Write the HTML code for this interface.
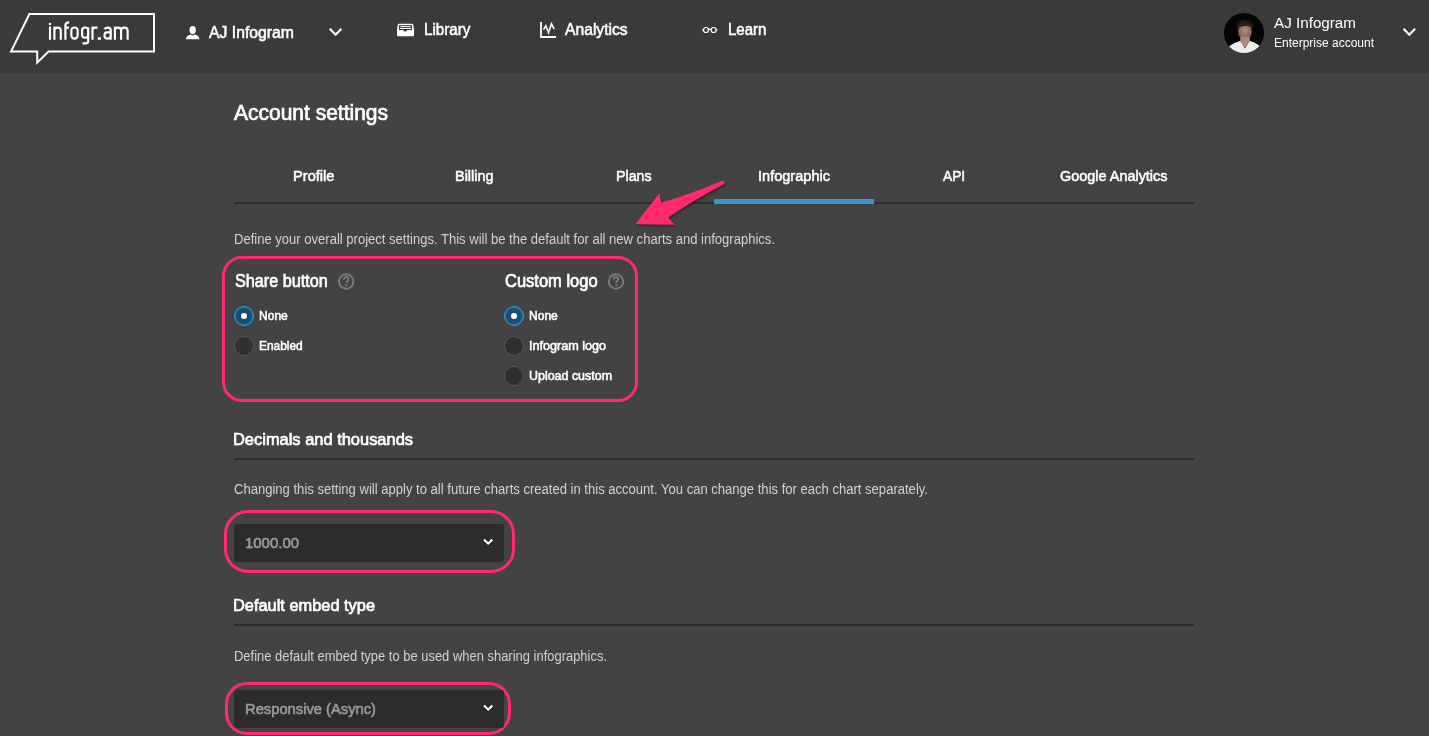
<!DOCTYPE html>
<html><head><meta charset="utf-8">
<style>
html,body{margin:0;padding:0;}
body{width:1429px;height:736px;overflow:hidden;background:#434343;position:relative;font-family:"Liberation Sans",sans-serif;}
.hdr{position:absolute;left:0;top:0;width:1429px;height:73px;background:#3a3a3a;}
.t{position:absolute;line-height:0;white-space:nowrap;}
.t span{display:inline-block;transform-origin:0 0;}
.abs{position:absolute;}
.line{position:absolute;left:234px;width:960px;height:2px;background:#2c2c2c;}
.pinkbox{position:absolute;border:3px solid #ff2a6d;box-sizing:border-box;}
.sel{position:absolute;left:234px;width:270px;height:38px;background:#2c2c2c;border-radius:3px;}
.radio{position:absolute;width:20px;height:20px;box-sizing:border-box;border-radius:50%;background:#2f2f2f;border:1px solid #565656;}
.radio.on{background:#194e74;border:1px solid #3a98d2;box-shadow:inset 0 0 0 1px rgba(58,152,210,0.45);}
.radio.on::after{content:"";position:absolute;left:50%;top:50%;width:6.6px;height:6.6px;margin:-3.3px 0 0 -3.3px;border-radius:50%;background:#fff;}
</style></head><body>
<div class="hdr"></div>
<svg class="abs" style="left:0;top:0" width="1429" height="736" viewBox="0 0 1429 736">
  <defs>
    <clipPath id="av"><circle cx="1244" cy="33" r="20"/></clipPath>
    <filter id="sh" x="-20%" y="-20%" width="140%" height="140%"><feDropShadow dx="1" dy="1.5" stdDeviation="1.2" flood-color="#000" flood-opacity="0.45"/></filter>
    <radialGradient id="face" cx="0.5" cy="0.45" r="0.6"><stop offset="0" stop-color="#b28a7c"/><stop offset="1" stop-color="#7a5a4e"/></radialGradient>
  </defs>
  <!-- logo bubble -->
  <path d="M11,51.6 L29.4,14 H154 V51.6 H48.5 L37.2,62.6 V51.6 Z" fill="none" stroke="#fff" stroke-width="2" stroke-linejoin="miter"/>
  <g fill="none" stroke="#fff" stroke-width="2.15" stroke-linejoin="round">
    <path d="M50,26.4 V39.8"/>
    <path d="M54.4,39.8 V26.4 M54.4,30.5 C54.4,28.3 55.8,27.55 57.6,27.55 C59.6,27.55 60.8,28.5 60.8,30.8 V39.8"/>
    <path d="M65.4,39.8 V25.5 C65.4,23 66.5,22.3 69.2,22.3 M65.4,27.6 H69"/>
    <rect x="71.35" y="27.45" width="6.3" height="11.2" rx="3.1"/>
    <rect x="82.05" y="27.45" width="6.1" height="10.3" rx="3"/>
    <path d="M88.15,27.5 V41.5 C88.15,43.2 87.2,43.4 85.5,43.4 H82.5"/>
    <path d="M92.5,39.8 V26.4 M92.5,30.5 C92.5,28.3 93.5,27.55 95.5,27.55 H97.5"/>
    <path d="M104.6,29.2 C105.2,27.9 106.3,27.55 107.8,27.55 C109.8,27.55 110.75,28.6 110.75,30.6 V39.8 M110.75,32.3 H106.8 C105,32.3 104.45,33.5 104.45,35.6 C104.45,37.8 105.4,38.65 107.2,38.65 C109.2,38.65 110.75,37.5 110.75,35.5"/>
    <path d="M114.9,39.8 V26.4 M114.9,30.5 C114.9,28.3 116,27.55 117.9,27.55 C120,27.55 121.1,28.5 121.1,30.8 V39.8 M121.1,30.8 C121.1,28.3 122.3,27.55 124.4,27.55 C126.6,27.55 127.65,28.5 127.65,30.8 V39.8"/>
  </g>
  <rect x="48.9" y="22.9" width="2.2" height="2.1" fill="#fff"/>
  <rect x="97.8" y="37.2" width="3.1" height="2.6" fill="#fff"/>
  <!-- user icon -->
  <g fill="#fff">
    <path d="M192.7,26 C190.4,26 189.5,27.8 189.5,30 C189.5,32.3 190.6,34.2 192.7,34.2 C194.8,34.2 195.9,32.3 195.9,30 C195.9,27.8 195,26 192.7,26 Z"/>
    <path d="M186,39.2 C186,36.6 187.6,35.6 190.6,34.6 L192.7,35.6 L194.8,34.6 C197.8,35.6 199.4,36.6 199.4,39.2 Z"/>
  </g>
  <!-- chevrons -->
  <path d="M329.8,28.8 L335.6,34.8 L341.4,28.8" fill="none" stroke="#fff" stroke-width="2.1"/>
  <path d="M1403.5,28.8 L1409.3,34.8 L1415.1,28.8" fill="none" stroke="#fff" stroke-width="2.1"/>
  <!-- library icon -->
  <path d="M399,23.8 H412 Q413,23.8 413.3,25 L414,29.5 V35.2 Q414,36.2 413,36.2 H398 Q397,36.2 397,35.2 V29.5 L397.7,25 Q398,23.8 399,23.8 Z" fill="#fff"/>
  <rect x="398.9" y="25.1" width="13.2" height="5" fill="#3a3a3a"/>
  <rect x="400.3" y="26.1" width="10.4" height="1" fill="#fff"/>
  <rect x="399.8" y="28" width="11.4" height="1" fill="#fff"/>
  <rect x="403.5" y="30" width="3.4" height="1.3" fill="#3a3a3a"/>
  <!-- analytics icon -->
  <path d="M541,22 V37 H556" fill="none" stroke="#fff" stroke-width="1.8"/>
  <path d="M543.5,29.6 L545.8,25.8 L548.5,32.6 L551.5,23.8 L554.2,29.2" fill="none" stroke="#fff" stroke-width="1.6" stroke-linejoin="miter"/>
  <!-- learn icon -->
  <g fill="none" stroke="#fff" stroke-width="1.2">
    <circle cx="706" cy="30" r="2.5"/><circle cx="713.6" cy="30" r="2.5"/>
    <path d="M708.5,29.6 Q709.8,28.8 711.1,29.6 M702,30 H703.5 M716.1,30 H717.6"/>
  </g>
  <!-- avatar -->
  <g clip-path="url(#av)">
    <rect x="1224" y="13" width="40" height="40" fill="#060505"/>
    <ellipse cx="1244.5" cy="26" rx="8.5" ry="6.5" fill="#1e1511"/>
    <ellipse cx="1245" cy="31.5" rx="6.8" ry="8.4" fill="url(#face)"/>
    <path d="M1237.5,28.5 Q1238,22.5 1245,22 Q1252,22.5 1252.5,28 Q1250,25.5 1246,26 Q1241,25.5 1237.5,28.5 Z" fill="#2c1f19"/>
    <path d="M1240.5,37 H1249.5 L1250,42 L1245,48 L1240,42 Z" fill="#b08a7c"/>
    <path d="M1224,52 Q1229,44 1240,41 L1245,48.5 L1250,41 Q1260,44 1265,52 V54 H1224 Z" fill="#ededed"/>
  </g>
  <!-- question icons -->
  <g fill="none" stroke="#7c7c7c" stroke-width="1.9">
    <circle cx="346.2" cy="281.5" r="7.2"/>
    <circle cx="616" cy="281.5" r="7.2"/>
    <path d="M343.9,279.6 C343.9,277.9 344.9,277.1 346.2,277.1 C347.6,277.1 348.5,277.9 348.5,279.2 C348.5,280.8 346.4,281 346.4,283"/>
    <path d="M613.7,279.6 C613.7,277.9 614.7,277.1 616,277.1 C617.4,277.1 618.3,277.9 618.3,279.2 C618.3,280.8 616.2,281 616.2,283"/>
  </g>
  <g fill="#7c7c7c"><rect x="345.4" y="284.2" width="2" height="2"/><rect x="615.2" y="284.2" width="2" height="2"/></g>
</svg>
<div class="line" style="top:202px"></div>
<div class="abs" style="left:714px;top:199px;width:160px;height:5px;background:#3a97cc"></div>
<div class="pinkbox" style="left:222px;top:256px;width:416px;height:146px;border-radius:20px"></div>
<div class="radio on" style="left:234px;top:306px"></div>
<div class="radio" style="left:234px;top:336px"></div>
<div class="radio on" style="left:504px;top:306px"></div>
<div class="radio" style="left:504px;top:336px"></div>
<div class="radio" style="left:504px;top:366px"></div>
<div class="line" style="top:458px"></div>
<div class="pinkbox" style="left:224px;top:510px;width:291px;height:63px;border-radius:24px"></div>
<div class="sel" style="top:524px"></div>
<div class="line" style="top:624px"></div>
<div class="pinkbox" style="left:225px;top:682px;width:286px;height:53px;border-radius:22px"></div>
<div class="sel" style="top:690px"></div>
<div class="t" style="left:209.00px;top:32.08px;font-size:16.5px;font-weight:400;color:#fff"><span style="transform:scaleX(0.9555);-webkit-text-stroke:0.55px currentColor;">AJ Infogram</span></div>
<div class="t" style="left:424.00px;top:29.28px;font-size:16.5px;font-weight:400;color:#fff"><span style="transform:scaleX(0.9180);-webkit-text-stroke:0.55px currentColor;">Library</span></div>
<div class="t" style="left:565.40px;top:29.28px;font-size:16.5px;font-weight:400;color:#fff"><span style="transform:scaleX(0.9496);-webkit-text-stroke:0.55px currentColor;">Analytics</span></div>
<div class="t" style="left:727.80px;top:29.28px;font-size:16.5px;font-weight:400;color:#fff"><span style="transform:scaleX(0.9099);-webkit-text-stroke:0.55px currentColor;">Learn</span></div>
<div class="t" style="left:1274.00px;top:22.83px;font-size:15.5px;font-weight:400;color:#fff"><span style="transform:scaleX(0.9813);">AJ Infogram</span></div>
<div class="t" style="left:1274.00px;top:42.84px;font-size:12px;font-weight:400;color:#fff"><span style="transform:scaleX(0.9994);">Enterprise account</span></div>
<div class="t" style="left:234.30px;top:112.55px;font-size:21.5px;font-weight:400;color:#fff"><span style="transform:scaleX(0.9762);-webkit-text-stroke:0.7px currentColor;">Account settings</span></div>
<div class="t" style="left:293.20px;top:175.63px;font-size:15.5px;font-weight:400;color:#fff"><span style="transform:scaleX(0.9445);-webkit-text-stroke:0.55px currentColor;">Profile</span></div>
<div class="t" style="left:454.50px;top:175.63px;font-size:15.5px;font-weight:400;color:#fff"><span style="transform:scaleX(0.9334);-webkit-text-stroke:0.55px currentColor;">Billing</span></div>
<div class="t" style="left:616.10px;top:175.63px;font-size:15.5px;font-weight:400;color:#fff"><span style="transform:scaleX(0.9181);-webkit-text-stroke:0.55px currentColor;">Plans</span></div>
<div class="t" style="left:757.70px;top:175.63px;font-size:15.5px;font-weight:400;color:#fff"><span style="transform:scaleX(0.9388);-webkit-text-stroke:0.55px currentColor;">Infographic</span></div>
<div class="t" style="left:942.50px;top:175.63px;font-size:15.5px;font-weight:400;color:#fff"><span style="transform:scaleX(0.8886);-webkit-text-stroke:0.55px currentColor;">API</span></div>
<div class="t" style="left:1060.20px;top:175.63px;font-size:15.5px;font-weight:400;color:#fff"><span style="transform:scaleX(0.9311);-webkit-text-stroke:0.55px currentColor;">Google Analytics</span></div>
<div class="t" style="left:234.00px;top:239.15px;font-size:14px;font-weight:400;color:#d2d2d2"><span style="transform:scaleX(0.9311);">Define your overall project settings. This will be the default for all new charts and infographics.</span></div>
<div class="t" style="left:234.50px;top:280.93px;font-size:17.5px;font-weight:400;color:#fff"><span style="transform:scaleX(0.9250);-webkit-text-stroke:0.7px currentColor;">Share button</span></div>
<div class="t" style="left:504.60px;top:280.93px;font-size:17.5px;font-weight:400;color:#fff"><span style="transform:scaleX(0.9426);-webkit-text-stroke:0.7px currentColor;">Custom logo</span></div>
<div class="t" style="left:259.40px;top:315.57px;font-size:12.5px;font-weight:400;color:#fff"><span style="transform:scaleX(0.9637);-webkit-text-stroke:0.55px currentColor;">None</span></div>
<div class="t" style="left:259.40px;top:345.57px;font-size:12.5px;font-weight:400;color:#fff"><span style="transform:scaleX(0.9526);-webkit-text-stroke:0.55px currentColor;">Enabled</span></div>
<div class="t" style="left:529.40px;top:315.57px;font-size:12.5px;font-weight:400;color:#fff"><span style="transform:scaleX(0.9637);-webkit-text-stroke:0.55px currentColor;">None</span></div>
<div class="t" style="left:529.40px;top:345.77px;font-size:12.5px;font-weight:400;color:#fff"><span style="transform:scaleX(1.0087);-webkit-text-stroke:0.55px currentColor;">Infogram logo</span></div>
<div class="t" style="left:529.40px;top:375.67px;font-size:12.5px;font-weight:400;color:#fff"><span style="transform:scaleX(0.9955);-webkit-text-stroke:0.55px currentColor;">Upload custom</span></div>
<div class="t" style="left:233.20px;top:440.01px;font-size:17px;font-weight:400;color:#fff"><span style="transform:scaleX(0.9669);-webkit-text-stroke:0.7px currentColor;">Decimals and thousands</span></div>
<div class="t" style="left:234.00px;top:489.45px;font-size:14px;font-weight:400;color:#d2d2d2"><span style="transform:scaleX(0.9321);">Changing this setting will apply to all future charts created in this account. You can change this for each chart separately.</span></div>
<div class="t" style="left:244.70px;top:543.17px;font-size:14.5px;font-weight:400;color:#9c9c9c"><span style="transform:scaleX(1.0302);-webkit-text-stroke:0.55px currentColor;">1000.00</span></div>
<div class="t" style="left:233.20px;top:606.01px;font-size:17px;font-weight:400;color:#fff"><span style="transform:scaleX(0.9632);-webkit-text-stroke:0.7px currentColor;">Default embed type</span></div>
<div class="t" style="left:234.00px;top:656.45px;font-size:14px;font-weight:400;color:#d2d2d2"><span style="transform:scaleX(0.9252);">Define default embed type to be used when sharing infographics.</span></div>
<div class="t" style="left:244.70px;top:708.97px;font-size:14.5px;font-weight:400;color:#9c9c9c"><span style="transform:scaleX(1.0160);-webkit-text-stroke:0.55px currentColor;">Responsive (Async)</span></div>

<svg class="abs" style="left:0;top:0" width="1429" height="736" viewBox="0 0 1429 736">
  <path d="M484,539.5 L488.2,543.7 L492.4,539.5" fill="none" stroke="#fff" stroke-width="2"/>
  <path d="M484,705.5 L488.2,709.7 L492.4,705.5" fill="none" stroke="#fff" stroke-width="2"/>
  <!-- arrow -->
  <path filter="url(#sh2)" fill="#ff2a6d" d="M635.6,224 L659.5,192.9 L661,202.7 Q690,194.5 721.3,181 Q724.5,180 724.6,182.4 Q724.4,184 722.6,184.8 Q692,201 668,217.6 L674.8,224.7 Z"/>
  <defs><filter id="sh2" x="-20%" y="-20%" width="140%" height="140%"><feDropShadow dx="1" dy="1.5" stdDeviation="1.2" flood-color="#000" flood-opacity="0.45"/></filter></defs>
</svg>
</body></html>
